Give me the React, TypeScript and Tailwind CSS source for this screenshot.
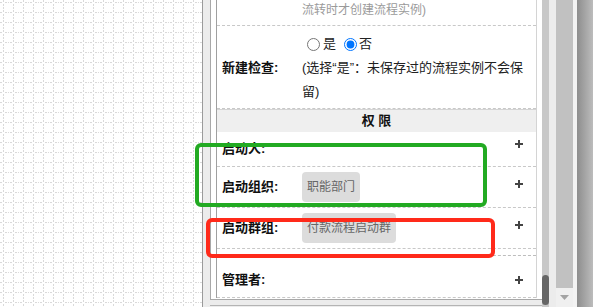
function GridCanvas() {
  return (
    <svg width="202" height="307" className="block">
      <defs>
        <pattern id="flowgrid" width="10" height="10" patternUnits="userSpaceOnUse">
          <g fill="#dadada" shapeRendering="crispEdges">
            <rect x="3" y="0" width="1" height="2" />
            <rect x="3" y="4" width="1" height="2" />
            <rect x="3" y="7" width="1" height="2" />
            <rect x="0" y="2" width="2" height="1" />
            <rect x="5" y="2" width="2" height="1" />
            <rect x="8" y="2" width="1" height="1" />
          </g>
        </pattern>
      </defs>
      <rect width="202" height="307" fill="#fff" />
      <rect width="202" height="307" fill="url(#flowgrid)" />
    </svg>
  );
}

function Plus() {
  return (
    <svg width="8" height="8" viewBox="0 0 8 8" className="block">
      <rect x="0" y="3" width="8" height="2" fill="#444" />
      <rect x="3" y="0" width="2" height="8" fill="#444" />
    </svg>
  );
}

function Tag({ text }: { text: string }) {
  return (
    <span className="flex h-[30px] items-center rounded-[4px] bg-[#dcdcdc] px-[5px] text-[12px] text-[#666]">
      {text}
    </span>
  );
}

function PermRow({ label, tag }: { label: string; tag?: string }) {
  return (
    <div
      className={
        tag
          ? "flex h-[41px] items-center border-b border-dashed border-[#c8c8c8] py-[5px]"
          : "flex h-[35px] items-center border-b border-dashed border-[#c8c8c8]"
      }
    >
      <div className="w-[85px] shrink-0 pl-[5px] font-bold text-[#111]">{label}</div>
      <div className="flex w-[200px] shrink-0">{tag && <Tag text={tag} />}</div>
      <div className="flex w-[34px] shrink-0 justify-center self-start pt-[8px]">
        <Plus />
      </div>
    </div>
  );
}

function Table() {
  return (
    <div className="w-[321px] border-l border-r border-l-[#a0a0a0] border-r-[#d4d4d4] text-[13px] text-[#222]">
      {/* tail of the previous row */}
      <div className="flex border-b border-dashed border-[#c8c8c8] pb-[5px]">
        <div className="w-[85px] shrink-0" />
        <div className="text-[12px] leading-[20px] text-[#9a9a9a]">流转时才创建流程实例)</div>
      </div>

      <div className="flex items-center border-b border-dashed border-[#c8c8c8] pt-[6px] pb-[4px]">
        <div className="w-[85px] shrink-0 pl-[5px] font-bold text-[#111]">新建检查:</div>
        <div className="leading-[24px]">
          <div className="flex h-[24px] items-center">
            <input type="radio" name="xjjc" className="m-0 ml-[5px] mr-[3px] h-[13px] w-[13px]" />
            <span>是</span>
            <input
              type="radio"
              name="xjjc"
              defaultChecked
              className="m-0 ml-[8px] mr-[2px] h-[13px] w-[13px]"
            />
            <span>否</span>
          </div>
          <div className="whitespace-nowrap">(选择“是”：未保存过的流程实例不会保</div>
          <div>留)</div>
        </div>
      </div>

      <div className="flex h-[23px] items-center justify-center border-t border-[#d4d4d4] bg-[#efefef] font-bold text-[#111]">
        权 限
      </div>

      <PermRow label="启动人:" />
      <PermRow label="启动组织:" tag="职能部门" />
      <PermRow label="启动群组:" tag="付款流程启动群" />

      <div className="h-[6px]" />

      <div className="flex h-[43px] items-start border-t border-t-[#bdbdbd] border-b border-dashed border-b-[#c8c8c8] pt-[12px]">
        <div className="w-[85px] shrink-0 pl-[5px] font-bold leading-[24px] text-[#111]">管理者:</div>
        <div className="w-[200px] shrink-0" />
        <div className="flex h-[24px] w-[34px] shrink-0 items-center justify-center">
          <Plus />
        </div>
      </div>
    </div>
  );
}

export default function App() {
  return (
    <div
      lang="zh-CN"
      className="relative flex h-[307px] w-[593px] overflow-hidden bg-white font-['Liberation_Sans','Noto_Sans_CJK_SC',sans-serif]"
    >
      <div className="w-[202px] shrink-0">
        <GridCanvas />
      </div>

      {/* property panel */}
      <div className="flex w-[375px] shrink-0 border-l border-[#9a9a9a] bg-[#ececec]">
        <div className="w-[7px] shrink-0" />
        <div className="flex w-[332px] shrink-0 flex-col">
          <div className="h-[300px] border-l border-b border-[#a8a8a8] bg-white px-[5px]">
            <Table />
          </div>
          <div className="mt-[5px] h-px bg-[#b4b4b4]" />
        </div>
        <div className="flex w-[7px] shrink-0 flex-col bg-[#c8c8c8]">
          <div className="h-[275px] shrink-0" />
          <div className="h-[30px] shrink-0 rounded-full bg-[#666]" />
        </div>
        <div className="w-[7px] shrink-0" />
        <div className="flex w-[17px] shrink-0 flex-col">
          <div className="h-[288px] shrink-0 bg-[#c1c1c1]" />
          <div className="flex flex-1 items-center justify-center bg-[#f0f0f0]">
            <svg width="9" height="5" viewBox="0 0 9 5" className="block">
              <polygon points="0,0 9,0 4.5,5" fill="#a3a3a3" />
            </svg>
          </div>
        </div>
        <div className="w-[4px] shrink-0 bg-[#f3f3f3]" />
      </div>

      <div className="w-[16px] shrink-0 bg-linear-to-r from-[#8e8e8e] to-[#bcbcbc]" />

      {/* annotation boxes */}
      <div className="absolute left-[195px] top-[143px] h-[64px] w-[292px] rounded-[6px] border-4 border-[#22aa22]" />
      <div className="absolute left-[206px] top-[218px] h-[40px] w-[289px] rounded-[6px] border-4 border-[#ff2a1a]" />
    </div>
  );
}
